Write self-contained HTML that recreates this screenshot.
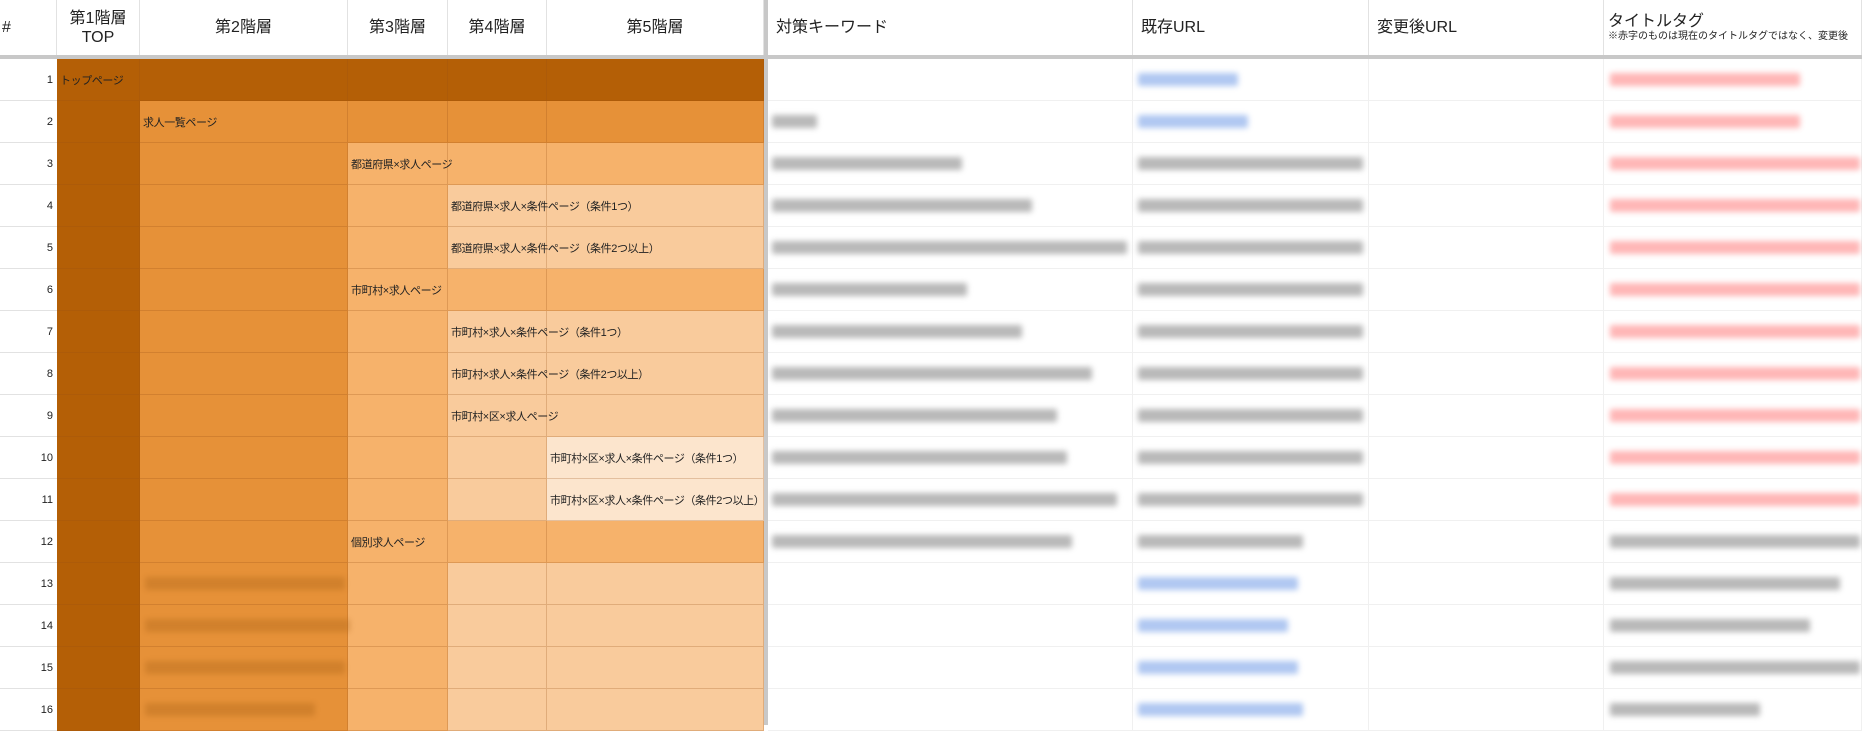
<!DOCTYPE html>
<html><head><meta charset="utf-8"><style>
body{margin:0;width:1862px;height:725px;overflow:hidden;background:#fff;font-family:"Liberation Sans","Noto Sans CJK JP",sans-serif;position:relative}
.h{position:absolute;top:0;height:55px;background:#fff;border-right:1px solid #e2e2e2;box-sizing:border-box;display:flex;align-items:center;justify-content:center;text-align:center;font-size:16px;color:#222;line-height:19px}
.hl{justify-content:flex-start;padding-left:8px;text-align:left}
.bar{position:absolute;top:55px;left:0;width:1862px;height:4px;background:#c8c8c8}
.vd{position:absolute;top:0;left:764px;width:4px;height:725px;background:#c8c8c8}
.c{position:absolute;height:42px;box-sizing:border-box;border-right:1px solid rgba(150,80,20,.25);border-bottom:1px solid rgba(150,80,20,.25)}
.t{position:absolute;height:42px;font-size:11px;letter-spacing:-0.4px;color:#222;display:flex;align-items:center;padding-left:3px;white-space:nowrap;z-index:2}
.n{position:absolute;left:0;width:57px;height:42px;box-sizing:border-box;border-bottom:1px solid #e2e2e2;font-size:11px;color:#222;display:flex;align-items:center;justify-content:flex-end;padding-right:4px}
.d{background:#b45f06}.m{background:#e69138}.l{background:#f6b26b}.ll{background:#f9cb9c}.lll{background:#fce5cd}
.r{position:absolute;height:42px;box-sizing:border-box;border-bottom:1px solid #f0f0f0;border-right:1px solid #f0f0f0}
.b{position:absolute;height:13px;filter:blur(3px);border-radius:2px}
.g{background:#8a8a8a;opacity:.6}.bl{background:#6f9ae6;opacity:.55}.rd{background:#ff5e5e;opacity:.45}
</style></head><body>
<div class="h" style="left:0;width:57px;justify-content:flex-start;padding-left:2px">#</div>
<div class="h" style="left:57px;width:83px">第1階層<br>TOP</div>
<div class="h" style="left:140px;width:208px">第2階層</div>
<div class="h" style="left:348px;width:100px">第3階層</div>
<div class="h" style="left:448px;width:99px">第4階層</div>
<div class="h" style="left:547px;width:217px">第5階層</div>
<div class="h hl" style="left:768px;width:365px">対策キーワード</div>
<div class="h hl" style="left:1133px;width:236px">既存URL</div>
<div class="h hl" style="left:1369px;width:235px">変更後URL</div>
<div class="h hl" style="left:1604px;width:258px;flex-direction:column;align-items:flex-start;justify-content:center;padding-left:4px"><span style="font-size:16px">タイトルタグ</span><span style="font-size:10px;line-height:12px;white-space:nowrap">※赤字のものは現在のタイトルタグではなく、変更後</span></div>
<div class="bar"></div>
<div id="g"></div>
<div class="vd"></div>
<script>
var X=[57,140,348,448,547,764],cls=[
['d','d','d','d','d'],['d','m','m','m','m'],['d','m','l','l','l'],['d','m','l','ll','ll'],['d','m','l','ll','ll'],['d','m','l','l','l'],['d','m','l','ll','ll'],['d','m','l','ll','ll'],['d','m','l','ll','ll'],['d','m','l','ll','lll'],['d','m','l','ll','lll'],['d','m','l','l','l'],['d','m','l','ll','ll'],['d','m','l','ll','ll'],['d','m','l','ll','ll'],['d','m','l','ll','ll']];
var txt={0:[0,'トップページ'],1:[1,'求人一覧ページ'],2:[2,'都道府県×求人ページ'],3:[3,'都道府県×求人×条件ページ（条件1つ）'],4:[3,'都道府県×求人×条件ページ（条件2つ以上）'],5:[2,'市町村×求人ページ'],6:[3,'市町村×求人×条件ページ（条件1つ）'],7:[3,'市町村×求人×条件ページ（条件2つ以上）'],8:[3,'市町村×区×求人ページ'],9:[4,'市町村×区×求人×条件ページ（条件1つ）'],10:[4,'市町村×区×求人×条件ページ（条件2つ以上）'],11:[2,'個別求人ページ']};
var kw=[0,45,190,260,355,195,250,320,285,295,345,300,0,0,0,0];
var ur=[[100,'bl'],[110,'bl'],[225,'g'],[225,'g'],[225,'g'],[225,'g'],[225,'g'],[225,'g'],[225,'g'],[225,'g'],[225,'g'],[165,'g'],[160,'bl'],[150,'bl'],[160,'bl'],[165,'bl']];
var ti=[[190,'rd'],[190,'rd'],[250,'rd'],[250,'rd'],[250,'rd'],[250,'rd'],[250,'rd'],[250,'rd'],[250,'rd'],[250,'rd'],[250,'rd'],[250,'g'],[230,'g'],[200,'g'],[250,'g'],[150,'g']];
var h='';
for(var i=0;i<16;i++){var y=59+i*42;
h+='<div class="n" style="top:'+y+'px">'+(i+1)+'</div>';
for(var j=0;j<5;j++){
h+='<div class="c '+cls[i][j]+'" style="top:'+y+'px;left:'+X[j]+'px;width:'+(X[j+1]-X[j])+'px"></div>';}
if(txt[i])h+='<div class="t" style="top:'+y+'px;left:'+X[txt[i][0]]+'px">'+txt[i][1]+'</div>';
if(i>=12){h+='<div class="b" style="top:'+(y+14)+'px;left:145px;width:'+[200,205,200,170][i-12]+'px;height:13px;background:#a05a10;opacity:.3"></div>';}
[[768,365],[1133,236],[1369,235],[1604,258]].forEach(function(c){h+='<div class="r" style="top:'+y+'px;left:'+c[0]+'px;width:'+c[1]+'px"></div>';});
if(kw[i])h+='<div class="b g" style="top:'+(y+14)+'px;left:772px;width:'+kw[i]+'px"></div>';
h+='<div class="b '+ur[i][1]+'" style="top:'+(y+14)+'px;left:1138px;width:'+ur[i][0]+'px"></div>';
h+='<div class="b '+ti[i][1]+'" style="top:'+(y+14)+'px;left:1610px;width:'+ti[i][0]+'px"></div>';
}
document.getElementById('g').innerHTML=h;
</script>
</body></html>
